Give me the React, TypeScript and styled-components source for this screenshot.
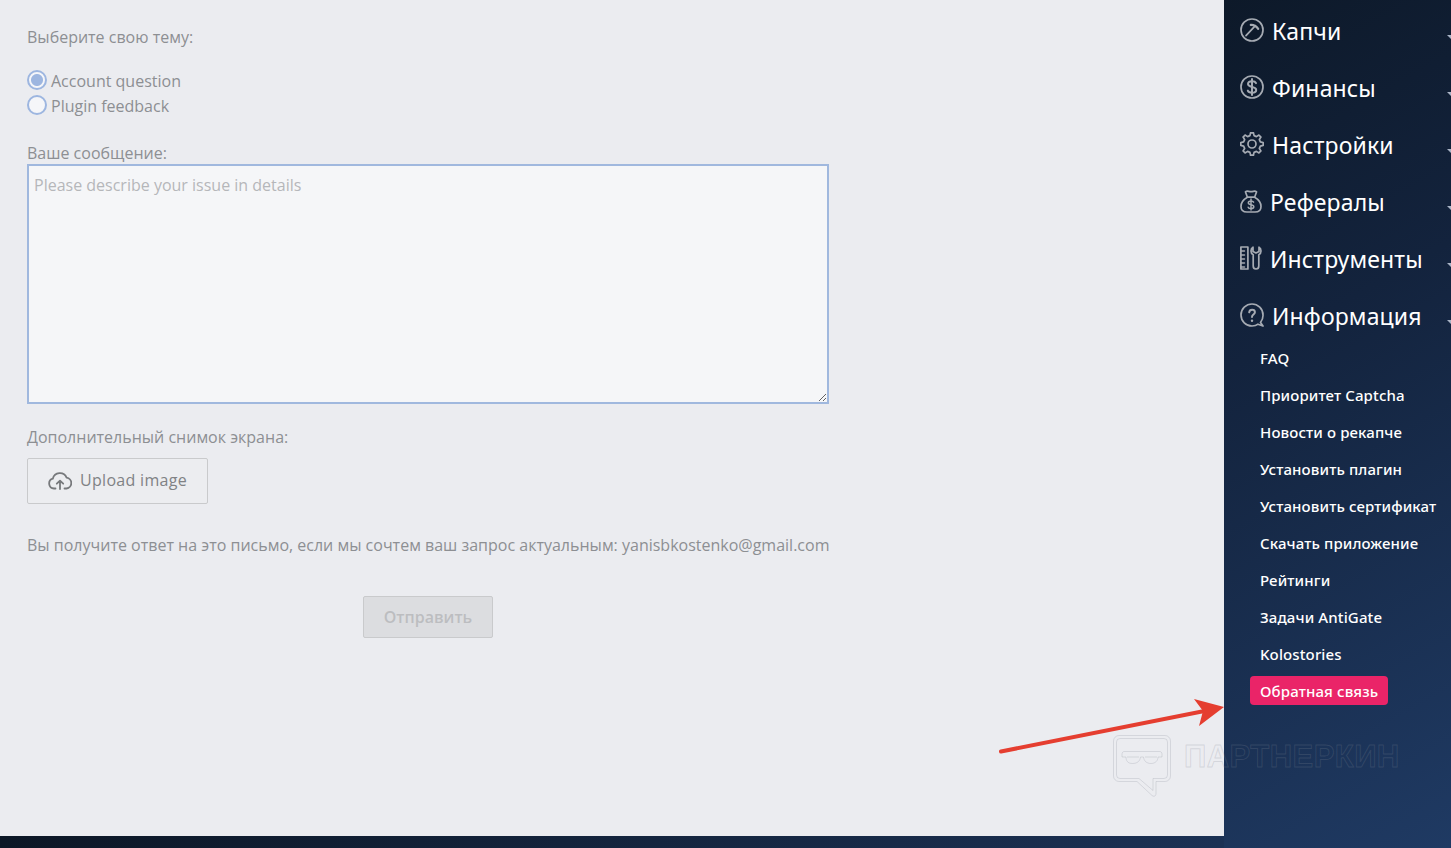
import React from "react";
import styled, { createGlobalStyle } from "styled-components";

const GlobalStyle = createGlobalStyle`
  html, body {
    margin: 0;
    padding: 0;
    height: 100%;
    overflow: hidden;
  }
  body {
    font-family: "Open Sans", "Liberation Sans", sans-serif;
    background: linear-gradient(90deg, #0c1726 0%, #1b3154 84%, #1f3a63 100%);
  }
`;

const Page = styled.div`
  position: relative;
  display: grid;
  grid-template-columns: 1224px 227px;
  height: 848px;
  overflow: hidden;
`;

const Main = styled.main`
  box-sizing: border-box;
  height: 836px;
  padding: 26px 0 0 27px;
  background: #ebecf0;
  color: #8d8f93;
  font-size: 16px;
`;

const Label = styled.div<{ $top?: number }>`
  height: 22px;
  line-height: 22px;
  margin-top: ${({ $top }) => $top || 0}px;
`;

const RadioGroup = styled.div`
  margin: 20px 0 24px;
`;

const RadioRow = styled.label`
  display: flex;
  align-items: center;
  gap: 4px;
  height: 25px;
`;

const Radio = styled.input.attrs({ type: "radio" })`
  appearance: none;
  box-sizing: border-box;
  width: 20px;
  height: 20px;
  margin: -1px 0 0;
  border: 2px solid #9db6e0;
  border-radius: 50%;
  background: #f5f6f9;
  &:checked {
    background: radial-gradient(circle, #9db6e0 0 5.5px, #f5f6f9 6.5px);
  }
`;

const Message = styled.textarea`
  display: block;
  box-sizing: border-box;
  width: 802px;
  height: 240px;
  padding: 8px 5px;
  border: 2px solid #a0b8de;
  background: #f5f6f8;
  outline: none;
  font: 16px/22px "Open Sans", sans-serif;
  color: #8d8f93;
  &::placeholder {
    color: #b5b7ba;
    opacity: 1;
  }
`;

const UploadButton = styled.button`
  display: flex;
  align-items: center;
  gap: 8px;
  box-sizing: border-box;
  width: 181px;
  height: 46px;
  margin-top: 10px;
  padding: 0 0 2px 20px;
  border: 1px solid #c9cacc;
  border-radius: 2px;
  background: #ecedf0;
  color: #808285;
  font: 500 16px "Open Sans", sans-serif;
  letter-spacing: 0.3px;
`;

const UploadIcon = styled.svg`
  fill: none;
  stroke: #77797c;
  stroke-width: 1.8;
  stroke-linecap: round;
  stroke-linejoin: round;
`;

const Note = styled.p`
  margin: 30px 0 0;
  width: 810px;
  height: 22px;
  line-height: 22px;
  white-space: nowrap;
`;

const Submit = styled.button`
  display: block;
  box-sizing: border-box;
  width: 130px;
  height: 42px;
  margin: 40px 0 0 336px;
  border: 1px solid #c9cacc;
  border-radius: 2px;
  background: #dcdde0;
  color: #bcbdc0;
  font: 600 16px "Open Sans", sans-serif;
`;

const Sidebar = styled.aside`
  box-sizing: border-box;
  height: 848px;
  padding-top: 7px;
  overflow: hidden;
  background: linear-gradient(150deg, #0d1929 0%, #13233d 38%, #1f3a63 100%);
  font-family: "Noto Sans", "Open Sans", sans-serif;
  color: #fff;
`;

const Nav = styled.nav`
  display: flex;
  flex-direction: column;
  gap: 10px;
`;

const NavRow = styled.div`
  position: relative;
  display: flex;
  align-items: center;
  gap: 8px;
  height: 47px;
  padding-left: 16px;
  font-size: 23px;
  letter-spacing: 0.15px;
  &::after {
    content: "";
    position: absolute;
    left: 223px;
    top: 28px;
    border-left: 5px solid transparent;
    border-right: 5px solid transparent;
    border-top: 5px solid #a9b4c6;
  }
`;

const Icon = styled.svg`
  flex: none;
  height: 24px;
  margin-top: -1px;
  fill: none;
  stroke: #a6abb3;
  stroke-width: 1.7;
  stroke-linecap: round;
  stroke-linejoin: round;
`;

const SubList = styled.ul`
  margin: 0;
  padding: 0 0 0 26px;
  list-style: none;
`;

const SubItem = styled.li`
  display: flex;
  align-items: center;
  height: 37px;
`;

const SubLink = styled.a<{ $active?: boolean }>`
  display: flex;
  align-items: center;
  height: 29px;
  padding: 0 10px;
  border-radius: 4px;
  font-size: 15px;
  font-weight: 500;
  letter-spacing: 0.12px;
  white-space: nowrap;
  background: ${({ $active }) => ($active ? "#ea2468" : "transparent")};
`;

const Arrow = styled.svg`
  position: absolute;
  left: 990px;
  top: 690px;
`;

const Watermark = styled.div`
  position: absolute;
  left: 1113px;
  top: 735px;
  display: flex;
  gap: 13px;
  pointer-events: none;
`;

const WatermarkIcon = styled.svg`
  fill: none;
  stroke: rgba(130, 138, 150, 0.22);
  stroke-width: 1;
`;

const WatermarkText = styled.span`
  margin-top: 4px;
  font: 700 31px "Liberation Sans", sans-serif;
  letter-spacing: 0.45px;
  color: transparent;
  -webkit-text-stroke: 1px rgba(130, 138, 150, 0.22);
`;

const gearPath = () => {
  const points: string[] = [];
  const teeth = 8;
  for (let i = 0; i < teeth; i++) {
    const a = (i / teeth) * Math.PI * 2 - Math.PI / 2;
    const step = Math.PI / teeth;
    const at = (r: number, t: number) =>
      `${(12 + r * Math.cos(t)).toFixed(2)} ${(12 + r * Math.sin(t)).toFixed(2)}`;
    points.push(`${i ? "L" : "M"}${at(8.6, a - step * 0.62)}`);
    points.push(`L${at(11.3, a - step * 0.32)}`);
    points.push(`L${at(11.3, a + step * 0.32)}`);
    points.push(`L${at(8.6, a + step * 0.62)}`);
  }
  return points.join(" ") + "Z";
};

const HammerIcon = () => (
  <Icon width="24" viewBox="0 0 24 24">
    <circle cx="12" cy="12" r="11" />
    <path d="M6 17.6 15.4 7.6" />
    <path d="M10.8 6.8c2.600-.2 5.400 1 7.400 4" strokeWidth="2.200" />
  </Icon>
);

const DollarIcon = () => (
  <Icon width="24" viewBox="0 0 24 24">
    <circle cx="12" cy="12" r="11" />
    <path d="M16 8.200c-.6-1.300-2-1.900-4-1.900-2.400 0-4 1.100-4 2.800 0 4 8.200 1.800 8.200 5.800 0 1.700-1.700 2.800-4.200 2.800-2.100 0-3.700-.7-4.200-2.100" strokeWidth="2" />
    <path d="M12 4v16" strokeWidth="2" />
  </Icon>
);

const GearIcon = () => (
  <Icon width="24" viewBox="0 0 24 24">
    <path d={gearPath()} />
    <circle cx="12" cy="12" r="4" />
  </Icon>
);

const MoneyBagIcon = () => (
  <Icon width="22" viewBox="0 0 22 24">
    <path d="M7.400 8.200C3.600 10.400 1 13.600 1 17.400 1 21.200 3.600 23 7 23h8c3.400 0 6-1.800 6-5.600 0-3.800-2.600-7-6.400-9.200" />
    <path d="M7.400 8.200h7.200M7.400 8.200 5.400 2.800c1.800-1.400 3-.2 5.600-.2s3.800-1.200 5.600.2l-2 5.400" />
    <path d="M13.600 13.200c-.5-.9-1.400-1.300-2.600-1.300-1.600 0-2.700.8-2.700 1.900 0 2.700 5.500 1.200 5.500 3.900 0 1.100-1.200 1.900-2.800 1.900-1.400 0-2.500-.5-2.800-1.400M11 10v11" strokeWidth="1.500" />
  </Icon>
);

const ToolsIcon = () => (
  <Icon width="22" viewBox="0 0 22 24">
    <rect x="0.9" y="1" width="7" height="22" />
    <path d="M1 5h3.500M1 9h3.500M1 13h3.500M1 17h3.500M1 21h3.500" strokeWidth="1.400" />
    <path d="M13 1.200C11.600 2 11 3.600 11 5c0 1.800 1 3.200 2.200 3.800V20c0 1.800 1.200 3 2.800 3s2.800-1.200 2.800-3V8.800C20 8.200 21 6.800 21 5c0-1.400-.6-3-2-3.800v4.300l-3 1.500-3-1.500Z" />
  </Icon>
);

const QuestionIcon = () => (
  <Icon width="24" viewBox="0 0 24 24">
    <path d="M12 1C6 1 1 5.900 1 12s5 11 11 11c2.500 0 4.500-.6 6-1.800l5 1.800-2.500-3.500A11 11 0 0 0 23 12C23 5.900 18 1 12 1Z" />
    <path d="M9.200 9.300c.2-1.600 1.400-2.500 2.900-2.500 1.600 0 2.800 1 2.800 2.400 0 2.300-2.900 2.400-2.900 4.700" strokeWidth="2" />
    <path d="M12 17.600v.1" strokeWidth="2.400" />
  </Icon>
);

const navItems = [
  { label: "Капчи", icon: <HammerIcon /> },
  { label: "Финансы", icon: <DollarIcon /> },
  { label: "Настройки", icon: <GearIcon /> },
  { label: "Рефералы", icon: <MoneyBagIcon /> },
  { label: "Инструменты", icon: <ToolsIcon /> },
  { label: "Информация", icon: <QuestionIcon /> },
];

const subItems = [
  "FAQ",
  "Приоритет Captcha",
  "Новости о рекапче",
  "Установить плагин",
  "Установить сертификат",
  "Скачать приложение",
  "Рейтинги",
  "Задачи AntiGate",
  "Kolostories",
  "Обратная связь",
];

const App = () => {
  return (
    <Page>
      <GlobalStyle />
      <Main>
        <Label>Выберите свою тему:</Label>
        <RadioGroup>
          <RadioRow>
            <Radio name="topic" defaultChecked />
            Account question
          </RadioRow>
          <RadioRow>
            <Radio name="topic" />
            Plugin feedback
          </RadioRow>
        </RadioGroup>
        <Label>Ваше сообщение:</Label>
        <Message placeholder="Please describe your issue in details" />
        <Label $top={22}>Дополнительный снимок экрана:</Label>
        <UploadButton>
          <UploadIcon width="24" height="20" viewBox="0 0 24 20">
            <path d="M7.500 18.500H6A5 5 0 0 1 4.800 8.700 7.300 7.300 0 0 1 18.600 7.600 5.500 5.500 0 0 1 18.500 18.500H16.500" />
            <path d="M12 19v-8M8.800 13.700 12 10.700l3.200 3" />
          </UploadIcon>
          Upload image
        </UploadButton>
        <Note>
          Вы получите ответ на это письмо, если мы сочтем ваш запрос актуальным: yanisbkostenko@gmail.com
        </Note>
        <Submit disabled>Отправить</Submit>
      </Main>
      <Sidebar>
        <Nav>
          {navItems.map((item) => (
            <NavRow key={item.label}>
              {item.icon}
              {item.label}
            </NavRow>
          ))}
        </Nav>
        <SubList>
          {subItems.map((item) => (
            <SubItem key={item}>
              <SubLink $active={item === "Обратная связь"}>{item}</SubLink>
            </SubItem>
          ))}
        </SubList>
      </Sidebar>
      <Arrow width="240" height="70" viewBox="990 690 240 70">
        <path d="M1001 751.500 1207 710.500" stroke="#e53e30" strokeWidth="4" strokeLinecap="round" fill="none" />
        <path d="M1224 707 1194 699 1203 711 1199 726Z" fill="#e53e30" />
      </Arrow>
      <Watermark>
        <WatermarkIcon width="58" height="62" viewBox="0 0 58 62">
          <path d="M6 .5h46a5.500 5.500 0 0 1 5.500 5.500v35a5.500 5.500 0 0 1-5.500 5.500h-9v12c0 3-2.500 3.500-4.500 1.500L24 46.500H6A5.500 5.500 0 0 1 .5 41V6A5.500 5.500 0 0 1 6 .5Z" />
          <path d="M7 3.500h44a3.500 3.500 0 0 1 3.500 3.500v33a3.500 3.500 0 0 1-3.500 3.500H40v12L26 43.500H7A3.500 3.500 0 0 1 3.500 40V7A3.500 3.500 0 0 1 7 3.500Z" />
          <path d="M9 19c0-1.500 1-2.500 2.500-2.500h35c1.500 0 2.500 1 2.500 2.500v3h-4c0 3.500-2.500 6.500-7 6.500S31 26 30.500 22h-3c-.5 4-3 6.500-8 6.500S13 25.500 13 22H9Z" />
          <path d="M14 22h12M32 22h12" />
        </WatermarkIcon>
        <WatermarkText>ПАРТНЕРКИН</WatermarkText>
      </Watermark>
    </Page>
  );
};

export default App;
